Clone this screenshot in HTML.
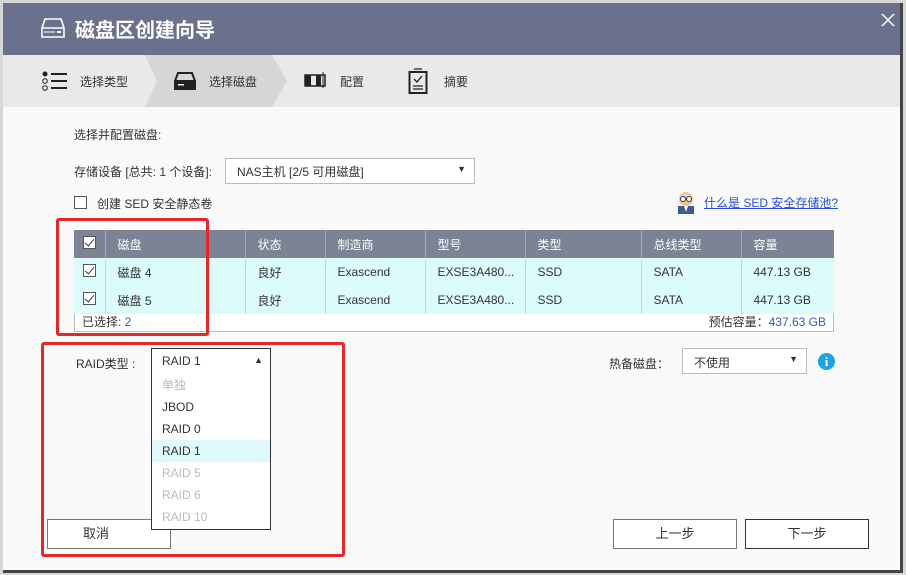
<!DOCTYPE html><html><head><meta charset="utf-8"><style>
*{box-sizing:border-box;margin:0;padding:0}
body{width:906px;height:575px;background:#d8d8d8;font-family:"Liberation Sans","Noto Sans CJK SC",sans-serif;font-size:12px;color:#333;position:relative;overflow:hidden}
.a{position:absolute}
#dlg{left:3px;top:3px;width:900px;height:570px;background:#f9f9f9;border-right:3px solid #444;border-bottom:3px solid #444}
#title{left:0;top:0;width:897px;height:52px;background:#6b708c;color:#fff;font-size:20px;font-weight:bold}
#steps{left:0;top:52px;width:897px;height:52px;background:#e9e9e9}
table{border-collapse:collapse;position:absolute;left:71px;top:227px;width:760px;font-size:12px}
th{background:#7c8394;color:#fff;font-weight:normal;text-align:left;height:28px;padding-left:12px;border-right:1px solid #a5abb8}
td{background:#dcfcfc;height:28px;padding-left:12px;border-right:1px solid #c4d4d4}
.cb{width:13px;height:13px;border:1px solid #555;background:#fff;display:inline-block;position:relative}
.cb.k::after{content:"";position:absolute;left:3px;top:0;width:4px;height:8px;border:solid #333;border-width:0 1.5px 1.5px 0;transform:rotate(40deg)}
.btn{background:#fff;border:1px solid #777;height:30px;text-align:center;line-height:28px;font-size:13px}
.red{border:3px solid #e3272a;border-radius:3px}
.dd div{height:22px;line-height:22px;padding-left:10px}
</style></head><body>
<div id="dlg" class="a">
<div id="title" class="a">
<svg class="a" style="left:38px;top:15px" width="24" height="20" viewBox="0 0 24 20"><path d="M4 1h16l3 9v9H1v-9z M1 10h22" fill="none" stroke="#fff" stroke-width="1.6"/><rect x="16" y="13" width="4" height="2" fill="#fff"/><path d="M3 14h11" stroke="#fff"/></svg>
<div class="a" style="left:72px;top:11px">磁盘区创建向导</div>
<svg class="a" style="left:878px;top:10px" width="14" height="14"><path d="M1 1L13 13M13 1L1 13" stroke="#fff" stroke-width="1.5"/></svg>
</div>
<div id="steps" class="a">
<svg class="a" style="left:142px;top:0" width="145" height="52"><polygon points="0,0 127,0 142,26 127,52 0,52 12,26" fill="#d6d6d6"/></svg>
<svg class="a" style="left:38px;top:16px" width="28" height="20"><circle cx="4" cy="3" r="2.5" fill="#222"/><circle cx="4" cy="10" r="2.3" fill="none" stroke="#222"/><circle cx="4" cy="17" r="2.3" fill="none" stroke="#222"/><path d="M10 3h16M10 10h16M10 17h16" stroke="#222" stroke-width="2"/></svg>
<div class="a" style="left:77px;top:18px">选择类型</div>
<svg class="a" style="left:170px;top:17px" width="24" height="18"><path d="M5 1h14l3 8v8H2V9z M2 9h20" fill="none" stroke="#222" stroke-width="2"/><rect x="3" y="10" width="18" height="6" fill="#222"/><rect x="5" y="12" width="6" height="1.5" fill="#fff"/></svg>
<div class="a" style="left:206px;top:18px">选择磁盘</div>
<svg class="a" style="left:301px;top:17px" width="24" height="16"><rect x="1" y="3" width="20" height="11" fill="none" stroke="#222" stroke-width="1.5"/><rect x="1" y="3" width="6" height="11" fill="#222"/><rect x="12" y="3" width="5" height="11" fill="#222"/><path d="M19 0v16" stroke="#222"/></svg>
<div class="a" style="left:337px;top:18px">配置</div>
<svg class="a" style="left:405px;top:13px" width="20" height="26"><rect x="1.5" y="4" width="17" height="21" fill="none" stroke="#222" stroke-width="2"/><path d="M6 1h8M6 11l3 3 5-6M5 18h10M5 21h10" fill="none" stroke="#222" stroke-width="1.3"/></svg>
<div class="a" style="left:441px;top:18px">摘要</div>
</div>
<div class="a" style="left:71px;top:123px">选择并配置磁盘:</div>
<div class="a" style="left:71px;top:160px">存储设备 [总共: 1 个设备]:</div>
<div class="a" style="left:222px;top:155px;width:250px;height:26px;background:#fff;border:1px solid #bbb;padding:4px 11px">NAS主机 [2/5 可用磁盘]<span class="a" style="right:8px;top:5px;font-size:9px">▼</span></div>
<span class="cb a" style="left:71px;top:193px"></span>
<div class="a" style="left:94px;top:192px">创建 SED 安全静态卷</div>
<svg class="a" style="left:671px;top:187px" width="24" height="24"><circle cx="12" cy="9" r="7" fill="#f3c38c"/><path d="M5 8q7-8 14 0" fill="#ddd"/><circle cx="9" cy="9" r="2.5" fill="#fff" stroke="#333"/><circle cx="15" cy="9" r="2.5" fill="#fff" stroke="#333"/><rect x="4" y="16" width="16" height="8" fill="#3a5d8c"/><path d="M10 16l2 6 2-6" fill="#fff"/></svg>
<div class="a" style="left:701px;top:191px;color:#2b4ed8;text-decoration:underline">什么是 SED 安全存储池?</div>
<table>
<tr><th style="width:31px;padding-left:9px"><span class="cb k"></span></th><th style="width:140px">磁盘</th><th style="width:80px">状态</th><th style="width:100px">制造商</th><th style="width:100px">型号</th><th style="width:116px">类型</th><th style="width:100px">总线类型</th><th style="border:0">容量</th></tr>
<tr><td style="padding-left:9px"><span class="cb k"></span></td><td>磁盘 4</td><td>良好</td><td>Exascend</td><td>EXSE3A480...</td><td>SSD</td><td>SATA</td><td style="border:0">447.13 GB</td></tr>
<tr><td style="padding-left:9px"><span class="cb k"></span></td><td>磁盘 5</td><td>良好</td><td>Exascend</td><td>EXSE3A480...</td><td>SSD</td><td>SATA</td><td style="border:0">447.13 GB</td></tr>
</table>
<div class="a" style="left:71px;top:311px;width:760px;height:18px;border:1px solid #bbb;border-top:0;background:#fff;font-size:12px;line-height:17px;padding:0 7px">已选择: <span style="color:#2a62b8">2</span><span style="float:right">预估容量：<span style="color:#2a62b8">437.63 GB</span></span></div>
<div class="a red" style="left:53px;top:215px;width:153px;height:118px"></div>
<div class="a" style="left:73px;top:352px">RAID类型 :</div>
<div class="a" style="left:148px;top:345px;width:120px;height:26px;background:#fff;border:1px solid #333;padding:5px 10px">RAID 1<span class="a" style="right:7px;top:6px;font-size:9px">▲</span></div>
<div class="a" style="left:44px;top:516px;width:124px;height:30px;background:#fff;border:1px solid #777;text-align:center;line-height:28px;font-size:13px"><span style="position:relative;left:-13px">取消</span></div>
<div class="a dd" style="left:148px;top:370px;width:120px;height:157px;background:#fff;border:1px solid #333;border-top:0;padding-top:1px">
<div style="color:#bbb">单独</div><div>JBOD</div><div>RAID 0</div><div style="background:#dffafa">RAID 1</div><div style="color:#bbb">RAID 5</div><div style="color:#bbb">RAID 6</div><div style="color:#bbb">RAID 10</div></div>
<div class="a red" style="left:38px;top:339px;width:304px;height:215px"></div>
<div class="a" style="left:606px;top:352px">热备磁盘：</div>
<div class="a" style="left:679px;top:345px;width:125px;height:26px;background:#fff;border:1px solid #bbb;padding:5px 11px">不使用<span class="a" style="right:8px;top:5px;font-size:9px">▼</span></div>
<div class="a" style="left:815px;top:350px;width:17px;height:17px;border-radius:50%;background:#1da1e8;color:#fff;font-weight:bold;text-align:center;line-height:17px;font-family:'Liberation Serif',serif;font-size:13px">i</div>
<div class="a btn" style="left:610px;top:516px;width:124px">上一步</div>
<div class="a btn" style="left:742px;top:516px;width:124px;border-color:#333">下一步</div>
</div>
</body></html>
